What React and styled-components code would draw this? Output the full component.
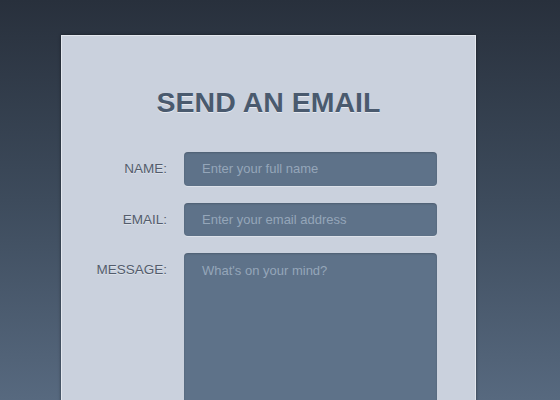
import styled, { createGlobalStyle } from "styled-components"

const GlobalStyle = createGlobalStyle`
    html, body {
        margin: 0;
        padding: 0;
    }
    body {
        height: 400px;
        overflow: hidden;
        background: linear-gradient(to bottom, #28303c 0%, #3d4b5c 50%, #57697f 100%);
        font-family: "Liberation Sans", Arial, sans-serif;
    }
`;

const Page = styled.div`
    height: 400px;
    overflow: hidden;
    padding: 35px 0 0 61px;
    box-sizing: border-box;
`;

const Card = styled.form`
    width: 415px;
    height: 420px;
    box-sizing: border-box;
    background-color: #cad1dd;
    border: 1px solid #e3e7ee;
    border-bottom: none;
    box-shadow: 0 0 3px rgba(0, 0, 0, 0.45);
    padding: 50px 0 0 0;
`;

const Title = styled.h1`
    margin: 0 0 33px 0;
    font-size: 28.5px;
    line-height: 33px;
    font-weight: bold;
    text-align: center;
    color: #4a5a6e;
    text-shadow: 0 1px 0 rgba(255, 255, 255, 0.55);
`;

const Fields = styled.div`
    display: grid;
    grid-template-columns: 105px 253px;
    column-gap: 17px;
    row-gap: 17px;
`;

const Label = styled.label`
    justify-self: end;
    align-self: ${props => (props.$top ? "start" : "center")};
    padding-top: ${props => (props.$top ? "9px" : "0")};
    font-size: 13.5px;
    color: #535c6c;
    text-shadow: 0 1px 0 rgba(255, 255, 255, 0.4);
`;

const fieldStyles = `
    box-sizing: border-box;
    width: 253px;
    border: none;
    border-radius: 4px;
    background-color: #5e7289;
    box-shadow: inset 0 1px 2px rgba(0, 0, 0, 0.18), 0 1px 0 rgba(255, 255, 255, 0.35);
    font-family: "Liberation Sans", Arial, sans-serif;
    font-size: 13px;
    color: #e6ebf1;
    padding: 0 18px;
    outline: none;

    &::placeholder {
        color: #95a6b9;
        opacity: 1;
    }
`;

const Input = styled.input`
    ${fieldStyles}
    height: 33.5px;
`;

const TextArea = styled.textarea`
    ${fieldStyles}
    height: 200px;
    padding-top: 9px;
    resize: none;
    line-height: 17px;
`;

export default function App() {
    return (
        <>
            <GlobalStyle />
            <Page>
                <Card>
                    <Title>SEND AN EMAIL</Title>
                    <Fields>
                        <Label htmlFor="name">NAME:</Label>
                        <Input id="name" placeholder="Enter your full name" />
                        <Label htmlFor="email">EMAIL:</Label>
                        <Input id="email" placeholder="Enter your email address" />
                        <Label htmlFor="message" $top>MESSAGE:</Label>
                        <TextArea id="message" placeholder="What's on your mind?" />
                    </Fields>
                </Card>
            </Page>
        </>
    )
}
